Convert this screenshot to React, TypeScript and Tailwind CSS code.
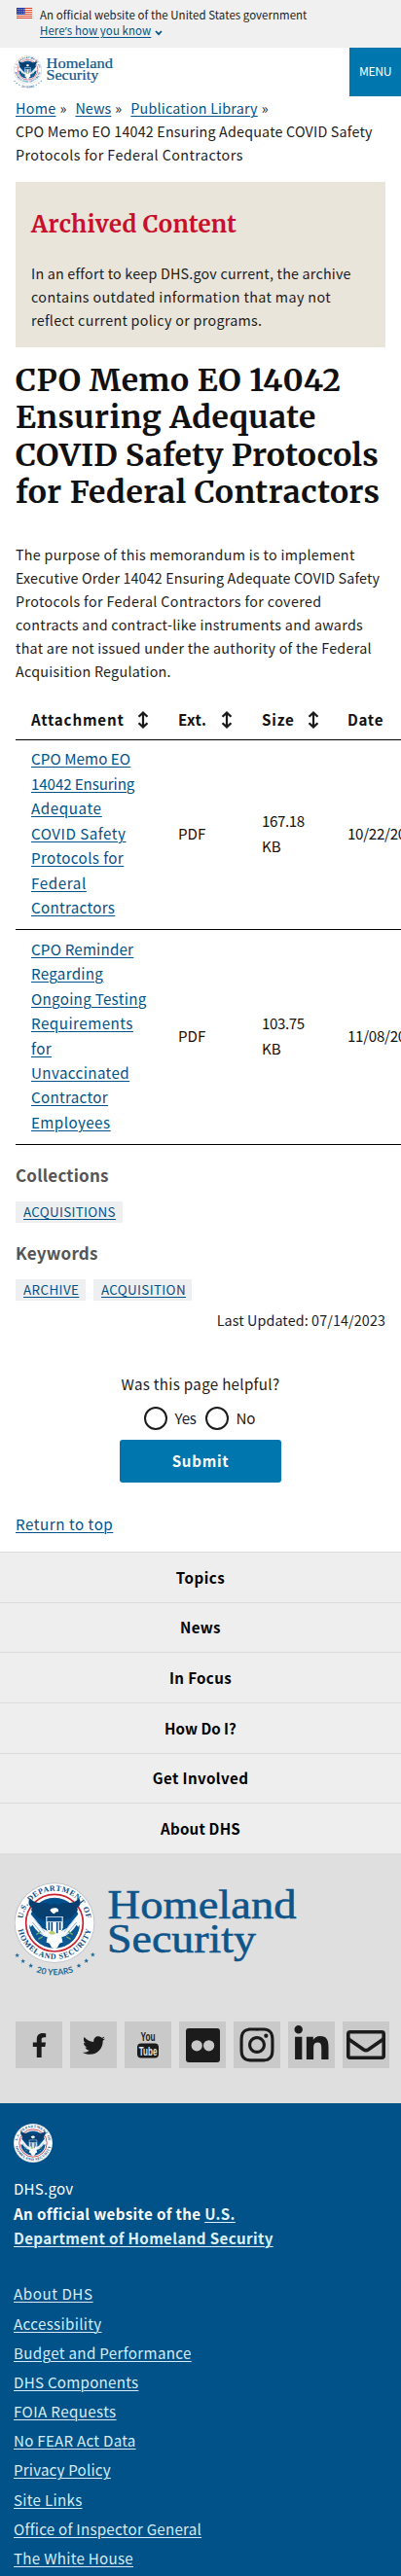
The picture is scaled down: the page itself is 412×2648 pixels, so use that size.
import type { ReactNode } from "react";
import { FaFacebookF, FaTwitter, FaInstagram, FaLinkedinIn } from "react-icons/fa";

type LineText = [text: string, className: string];

function Lines({ items }: { items: LineText[] }) {
  return (
    <>
      {items.map(([text, cls]) => (
        <span key={text} className={`block whitespace-nowrap ${cls}`}>
          {text}
        </span>
      ))}
    </>
  );
}

const star = "0,-9 2.6,-3 9,-2.8 4,1.4 5.6,7.6 0,4 -5.6,7.6 -4,1.4 -9,-2.8 -2.6,-3";

function SealArt({ id }: { id: string }) {
  return (
    <>
      <circle cx="168" cy="170" r="124" fill="#c3c7cd" />
      <circle cx="168" cy="170" r="121" fill="#ffffff" />
      <circle cx="168" cy="170" r="88" fill="none" stroke="#c8202f" strokeWidth="5" />
      <circle cx="168" cy="170" r="78" fill="#01508d" />
      <path d="M94 142 L84 168 L128 226 L168 238 L208 226 L252 168 L242 142 L206 186 L168 206 L130 186 Z" fill="#f4f8fb" />
      <path d="M100 168 L132 206 M108 160 L138 198 M236 168 L204 206 M228 160 L198 198" stroke="#9db9d2" strokeWidth="3" fill="none" />
      <path d="M92 186 Q100 228 140 243 L146 214 Q118 206 100 176 Z M244 186 Q236 228 196 243 L190 214 Q218 206 236 176 Z" fill="#0b5794" />
      <path d="M112 206 l14 -10 M118 220 l14 -8 M224 206 l-14 -10 M218 220 l-14 -8" stroke="#6fa46a" strokeWidth="4" fill="none" />
      <path
        d="M92 94 Q108 112 134 108 Q150 104 154 116 Q168 104 182 116 Q186 104 202 108 Q228 112 244 94 Q254 112 238 124 Q244 134 228 142 Q226 156 206 158 Q196 168 188 160 L148 160 Q140 168 130 158 Q110 156 108 142 Q92 134 98 124 Q82 112 92 94 Z"
        fill="#073f70"
      />
      <path d="M154 130 Q160 122 172 124 Q182 126 180 136 Q170 134 168 142 Q160 142 154 130 Z" fill="#ffffff" />
      <path d="M142 150 H194 V184 Q190 204 168 212 Q146 204 142 184 Z" fill="#ffffff" />
      <path d="M145 152 H191 V166 H145 Z" fill="#0a4d86" />
      <path d="M151 168 V192 M160 168 V202 M176 168 V202 M185 168 V192" stroke="#0a4d86" strokeWidth="5" />
      <path d="M146 222 L168 208 L190 222 L178 244 L168 252 L158 244 Z" fill="#ffffff" />
      <path d="M150 200 q12 -12 22 2 q-12 10 -22 -2 Z" fill="#b9cf73" />
      <path id={`${id}-top`} d="M73 198 A99 99 0 1 1 263 198" fill="none" />
      <path id={`${id}-bottom`} d="M54 182 A115 115 0 0 0 282 182" fill="none" />
      <text className="font-['Liberation_Serif']" fontSize="24" fontWeight="700" fill="#0a4b82">
        <textPath href={`#${id}-top`} startOffset="50%" textAnchor="middle" textLength="284">
          U.S. DEPARTMENT OF
        </textPath>
      </text>
      <text className="font-['Liberation_Serif']" fontSize="24" fontWeight="700" fill="#0a4b82">
        <textPath href={`#${id}-bottom`} startOffset="50%" textAnchor="middle" textLength="312">
          HOMELAND SECURITY
        </textPath>
      </text>
    </>
  );
}

function Logo({ id, className }: { id: string; className: string }) {
  const stars = [
    [53, 270],
    [71, 288],
    [95, 302],
    [243, 302],
    [266, 287],
    [286, 268],
  ];
  return (
    <svg viewBox="0 0 300 110" className={className} role="img" aria-label="Homeland Security">
      <g transform="translate(-15 -12) scale(0.33333)">
        <SealArt id={id} />
        {stars.map(([x, y]) => (
          <polygon key={x} points={star} fill="#216a9b" transform={`translate(${x} ${y}) scale(0.8)`} />
        ))}
        <path id={`${id}-years`} d="M106 320 Q168 342 232 320" fill="none" />
        <text className="font-['Lato']" fontSize="26" fontWeight="700" fill="#216a9b">
          <textPath href={`#${id}-years`} startOffset="50%" textAnchor="middle" textLength="118">
            20 YEARS
          </textPath>
        </text>
      </g>
      <g className="font-['Liberation_Serif']" fontSize="43" fill="#0f558a" stroke="#0f558a" strokeWidth="0.6">
        <text x="95.5" y="39.5" textLength="194" lengthAdjust="spacingAndGlyphs">
          Homeland
        </text>
        <text x="95" y="75" textLength="153" lengthAdjust="spacingAndGlyphs">
          Security
        </text>
      </g>
    </svg>
  );
}

function Flag() {
  return (
    <svg viewBox="0 0 16 11" className="h-[11px] w-4" aria-hidden="true">
      <rect width="16" height="11" fill="#ffffff" />
      {[0, 2, 4, 6, 8, 10].map((y) => (
        <rect key={y} y={y} width="16" height="1" fill="#db3e1f" />
      ))}
      <rect width="8.6" height="7" fill="#1e33b1" />
      {[1, 3, 5].map((y) =>
        [1, 3, 5, 7].map((x) => <rect key={`${x}-${y}`} x={x} y={y} width="0.8" height="0.8" fill="#ffffff" />),
      )}
    </svg>
  );
}

function SortIcon() {
  return (
    <svg viewBox="0 0 12 18" className="h-[18px] w-3" fill="none" stroke="#1b1b1b" strokeWidth="2.2" aria-hidden="true">
      <path d="M6 2 V16 M1.5 5.8 L6 1.6 L10.5 5.8 M1.5 12.2 L6 16.4 L10.5 12.2" />
    </svg>
  );
}

const link = "underline decoration-1 underline-offset-2 text-[#005288]";

const columns: { label: string; className: string; width: string; sortable: boolean }[] = [
  { label: "Attachment", className: "tracking-[0.8px] w-[109px]", width: "w-[151px]", sortable: true },
  { label: "Ext.", className: "tracking-[0.4px] w-[44px]", width: "w-[86px]", sortable: true },
  { label: "Size", className: "tracking-[0.8px] w-[47px]", width: "w-[88px]", sortable: true },
  { label: "Date", className: "tracking-[0.7px] w-[60px]", width: "w-[155px]", sortable: false },
];

const rows: { title: LineText[]; height: string; size: LineText; date: string }[] = [
  {
    title: [
      ["CPO Memo EO", "tracking-[0.08px]"],
      ["14042 Ensuring", "tracking-[-0.1px]"],
      ["Adequate", "tracking-[0.6px]"],
      ["COVID Safety", "tracking-[0.5px]"],
      ["Protocols for", "tracking-[0.4px]"],
      ["Federal", "tracking-[0.6px]"],
      ["Contractors", "tracking-[0.3px]"],
    ],
    height: "h-[195px]",
    size: ["167.18", "tracking-[-0.4px]"],
    date: "10/22/2021",
  },
  {
    title: [
      ["CPO Reminder", "tracking-[0.2px]"],
      ["Regarding", "tracking-[0.3px]"],
      ["Ongoing Testing", "tracking-[0.3px]"],
      ["Requirements", "tracking-[0.5px]"],
      ["for", "tracking-[0.4px]"],
      ["Unvaccinated", "tracking-[0.4px]"],
      ["Contractor", "tracking-[0.3px]"],
      ["Employees", "tracking-[0.45px]"],
    ],
    height: "h-[221px]",
    size: ["103.75", "tracking-[-0.4px]"],
    date: "11/08/2021",
  },
];

const navItems: LineText[] = [
  ["Topics", "tracking-[0.5px]"],
  ["News", "tracking-[0.3px]"],
  ["In Focus", "tracking-[0.35px]"],
  ["How Do I?", "tracking-[0px]"],
  ["Get Involved", "tracking-[0.38px]"],
  ["About DHS", "tracking-[0.2px]"],
];

const footerLinks: LineText[] = [
  ["About DHS", "tracking-[0.56px]"],
  ["Accessibility", "tracking-[0.33px]"],
  ["Budget and Performance", "tracking-[0.33px]"],
  ["DHS Components", "tracking-[0.26px]"],
  ["FOIA Requests", "tracking-[0.38px]"],
  ["No FEAR Act Data", "tracking-[0.26px]"],
  ["Privacy Policy", "tracking-[0.18px]"],
  ["Site Links", "tracking-[0.3px]"],
  ["Office of Inspector General", "tracking-[0.24px]"],
  ["The White House", "tracking-[0.28px]"],
];

function Tag({ children, className }: { children: ReactNode; className: string }) {
  return (
    <a href="#" className={`block h-[22px] bg-[#edeff0] pl-2 text-[13.4px] leading-[20.5px] ${link} ${className}`}>
      {children}
    </a>
  );
}

function Radio({ label, className }: { label: string; className: string }) {
  return (
    <label className="flex items-center">
      <span className="size-6 rounded-full border-2 border-[#1b1b1b] bg-white" />
      <span className={`-mt-[2px] ml-2 ${className}`}>{label}</span>
    </label>
  );
}

function YouTubeMark() {
  return (
    <svg viewBox="0 0 24 28" className="h-7 w-6" aria-label="YouTube">
      <rect x="1" y="12.5" width="22" height="15" rx="4" fill="#1b1b1b" />
      <g className="font-['Liberation_Sans']" fontWeight="700" fontSize="12.5">
        <text x="4.5" y="10.3" textLength="15" lengthAdjust="spacingAndGlyphs" fill="#1b1b1b">
          You
        </text>
        <text x="2.8" y="24.8" textLength="18.6" lengthAdjust="spacingAndGlyphs" fill="#e4e4e4">
          Tube
        </text>
      </g>
    </svg>
  );
}

function FlickrMark() {
  return (
    <svg viewBox="0 0 35 35" className="size-[35px]" aria-label="Flickr">
      <rect width="35" height="35" rx="3" fill="#1b1b1b" />
      <circle cx="11.2" cy="17.8" r="5.6" fill="#c9c9c9" />
      <circle cx="23.6" cy="17.8" r="5.6" fill="#c9c9c9" />
    </svg>
  );
}

function EnvelopeMark() {
  return (
    <svg viewBox="0 0 40 30" className="h-[30px] w-10" fill="none" stroke="currentColor" strokeWidth="3.6" aria-label="Email">
      <rect x="1.8" y="1.8" width="36.4" height="26.4" rx="2" />
      <path d="M2 9 L17.4 19.8 Q20 21.6 22.6 19.8 L38 9" />
    </svg>
  );
}

export default function App() {
  const social = [
    <FaFacebookF key="facebook" className="size-[25px]" />,
    <FaTwitter key="twitter" className="size-[23px]" />,
    <YouTubeMark key="youtube" />,
    <FlickrMark key="flickr" />,
    <FaInstagram key="instagram" className="size-10" />,
    <FaLinkedinIn key="linkedin" className="-mt-px size-10" />,
    <EnvelopeMark key="email" />,
  ];

  return (
    <div className="flex h-[2648px] w-[412px] flex-col overflow-hidden bg-white font-['Noto_Sans_CJK_SC',sans-serif] text-[14.3px] leading-6 text-[#1b1b1b]">
      <div className="flex h-[49px] shrink-0 gap-2 bg-[#f0f0f0] pl-[17px] pt-[7px] text-[11.45px] leading-4">
        <div className="pt-px">
          <Flag />
        </div>
        <div>
          <p className="whitespace-nowrap tracking-[0.06px]">An official website of the United States government</p>
          <a href="#" className="flex items-center text-[#005288]">
            <span className="underline decoration-1 underline-offset-2 tracking-[0.1px]">
              Here<span className="font-['Open_Sans']">’</span>s how you know
            </span>
            <svg viewBox="0 0 8 6" className="ml-1 mt-1 h-1.5 w-2" fill="none" stroke="currentColor" strokeWidth="1.7" aria-hidden="true">
              <path d="M1 1 L4 4.2 L7 1" />
            </svg>
          </a>
        </div>
      </div>

      <header className="flex h-[50px] shrink-0 justify-between">
        <Logo id="header" className="ml-[14px] mt-[7px] h-[38.7px] w-[105.6px]" />
        <button className="h-[50px] w-[53px] bg-[#0076ae] pb-[2px] text-[12.2px] tracking-[-0.4px] text-white">MENU</button>
      </header>

      <nav className="shrink-0 px-4">
        <div className="flex">
          <a href="#" className={`${link} tracking-[0.3px]`}>Home</a>
          <span className="ml-1 w-4">»</span>
          <a href="#" className={`${link} tracking-[0.1px]`}>News</a>
          <span className="ml-1 w-4">»</span>
          <a href="#" className={`${link} tracking-[0.2px]`}>Publication Library</a>
          <span className="ml-1">»</span>
        </div>
        <Lines
          items={[
            ["CPO Memo EO 14042 Ensuring Adequate COVID Safety", "tracking-[0.2px]"],
            ["Protocols for Federal Contractors", "tracking-[0.44px]"],
          ]}
        />
      </nav>

      <main className="shrink-0">
        <section className="mx-4 mt-4 h-[170px] bg-[#e9e5da] px-4 pt-[29px]">
          <h2 className="mb-6 whitespace-nowrap font-['Merriweather','DejaVu_Serif',serif] text-2xl font-bold leading-[29px] tracking-[0.4px] text-[#c8102e]">
            Archived Content
          </h2>
          <Lines
            items={[
              ["In an effort to keep DHS.gov current, the archive", "tracking-[0.21px]"],
              ["contains outdated information that may not", "tracking-[0.39px]"],
              ["reflect current policy or programs.", "tracking-[0.3px]"],
            ]}
          />
        </section>

        <h1 className="mx-4 mt-[15px] font-['Merriweather','DejaVu_Serif',serif] text-[32px] font-bold leading-[38.4px] text-[#111111]">
          <Lines
            items={[
              ["CPO Memo EO 14042", "tracking-[0.55px]"],
              ["Ensuring Adequate", "tracking-[0.45px]"],
              ["COVID Safety Protocols", "tracking-[0.3px]"],
              ["for Federal Contractors", "tracking-[0.5px]"],
            ]}
          />
        </h1>

        <p className="mx-4 mt-[32.4px]">
          <Lines
            items={[
              ["The purpose of this memorandum is to implement", "tracking-[0.31px]"],
              ["Executive Order 14042 Ensuring Adequate COVID Safety", "tracking-[0.15px]"],
              ["Protocols for Federal Contractors for covered", "tracking-[0.38px]"],
              ["contracts and contract-like instruments and awards", "tracking-[0.31px]"],
              ["that are not issued under the authority of the Federal", "tracking-[0.27px]"],
              ["Acquisition Regulation.", "tracking-[0.27px]"],
            ]}
          />
        </p>

        <div className="ml-4 mt-[17px] overflow-hidden">
          <table className="w-[480px] table-fixed border-separate border-spacing-0 text-[15.15px] leading-[25.44px] text-[#111111]">
            <thead>
              <tr className="h-[42px]">
                {columns.map((c) => (
                  <th key={c.label} className={`border-b border-black p-0 pl-4 pt-px text-left align-middle font-bold ${c.width}`}>
                    <span className="flex items-center">
                      <span className={c.className}>{c.label}</span>
                      {c.sortable && <SortIcon />}
                    </span>
                  </th>
                ))}
              </tr>
            </thead>
            <tbody>
              {rows.map((r) => (
                <tr key={r.date} className={r.height}>
                  <td className="border-b border-black p-0 pb-[3px] pl-4 align-middle">
                    <a href="#" className={link}>
                      {r.title.map(([text, cls]) => (
                        <span key={text} className="block whitespace-nowrap">
                          <span className={`underline decoration-1 underline-offset-2 ${cls}`}>{text}</span>
                        </span>
                      ))}
                    </a>
                  </td>
                  <td className="border-b border-black p-0 pb-[3px] pl-4 align-middle">PDF</td>
                  <td className="border-b border-black p-0 pb-[3px] pl-4 align-middle">
                    <Lines items={[r.size, ["KB", "tracking-[0px]"]]} />
                  </td>
                  <td className="border-b border-black p-0 pb-[3px] pl-4 align-middle tracking-[-0.3px]">{r.date}</td>
                </tr>
              ))}
            </tbody>
          </table>
        </div>

        <section className="mx-4 mt-[19px]">
          <h2 className="text-[17px] font-bold leading-6 tracking-[0.2px] text-[#555555]">Collections</h2>
          <div className="mt-[15px] flex">
            <Tag className="w-[110px] tracking-[0.32px]">ACQUISITIONS</Tag>
          </div>
          <h2 className="mt-[19px] text-[17px] font-bold leading-6 tracking-[0.25px] text-[#555555]">Keywords</h2>
          <div className="mt-[15px] flex gap-2">
            <Tag className="w-[72px] tracking-[0.42px]">ARCHIVE</Tag>
            <Tag className="w-[101px] tracking-[0.35px]">ACQUISITION</Tag>
          </div>
          <p className="mt-2 text-right tracking-[0.12px]">Last Updated: 07/14/2023</p>
        </section>

        <form className="mt-[41px] flex flex-col items-center text-[15.15px]">
          <p className="tracking-[0.3px]">Was this page helpful?</p>
          <div className="mt-3 flex gap-[9px]">
            <Radio label="Yes" className="w-[22px] tracking-[-0.2px]" />
            <Radio label="No" className="w-[22px] tracking-[-0.2px]" />
          </div>
          <button type="button" className="mt-[10px] h-11 w-[166px] rounded-[3px] bg-[#0076ae] pb-[2px] font-bold tracking-[0.7px] text-white">
            Submit
          </button>
        </form>

        <div className="mt-[30px] h-[41px] px-4 text-[15.15px]">
          <a href="#" className={`${link} tracking-[0.55px]`}>Return to top</a>
        </div>
      </main>

      <footer className="shrink-0">
        <nav className="h-[310px] bg-[#eeeeee]">
          {navItems.map(([text, cls]) => (
            <a
              key={text}
              href="#"
              className={`flex h-[51.7px] items-center justify-center border-t border-[#dcdcdc] pb-[1.5px] text-[15.15px] font-bold text-black ${cls}`}
            >
              {text}
            </a>
          ))}
        </nav>

        <section className="h-[257px] bg-[#dfdfdf] pt-[27px]">
          <Logo id="footer" className="ml-[15px] h-[110px] w-[300px]" />
          <div className="ml-4 mt-9 flex gap-2 text-[#1b1b1b]">
            {social.map((icon) => (
              <a key={icon.key} href="#" className="flex size-12 items-center justify-center bg-[#c9c9c9]">
                {icon}
              </a>
            ))}
          </div>
        </section>

        <section className="h-[486px] bg-[#005288] px-[14px] pt-[21px] text-[15.15px] text-white">
          <svg viewBox="44 46 248 248" className="size-10" role="img" aria-label="Department of Homeland Security seal">
            <SealArt id="small" />
          </svg>
          <p className="mt-[14px] leading-[25.5px] tracking-[0.2px]">DHS.gov</p>
          <p className="whitespace-nowrap font-bold leading-[25.2px]">
            <span className="tracking-[0.36px]">An official website of the </span>
            <a href="#" className="tracking-[0.36px] text-[#dff2fb] underline decoration-1 underline-offset-2">
              U.S.
              <br />
              Department of Homeland Security
            </a>
          </p>
          <ul className="mt-[29.5px]">
            {footerLinks.map(([text, cls]) => (
              <li key={text} className="h-[30.16px] leading-[30.16px]">
                <a href="#" className={`text-[#d6ecf8] underline decoration-1 underline-offset-2 ${cls}`}>
                  {text}
                </a>
              </li>
            ))}
          </ul>
        </section>
      </footer>
    </div>
  );
}
